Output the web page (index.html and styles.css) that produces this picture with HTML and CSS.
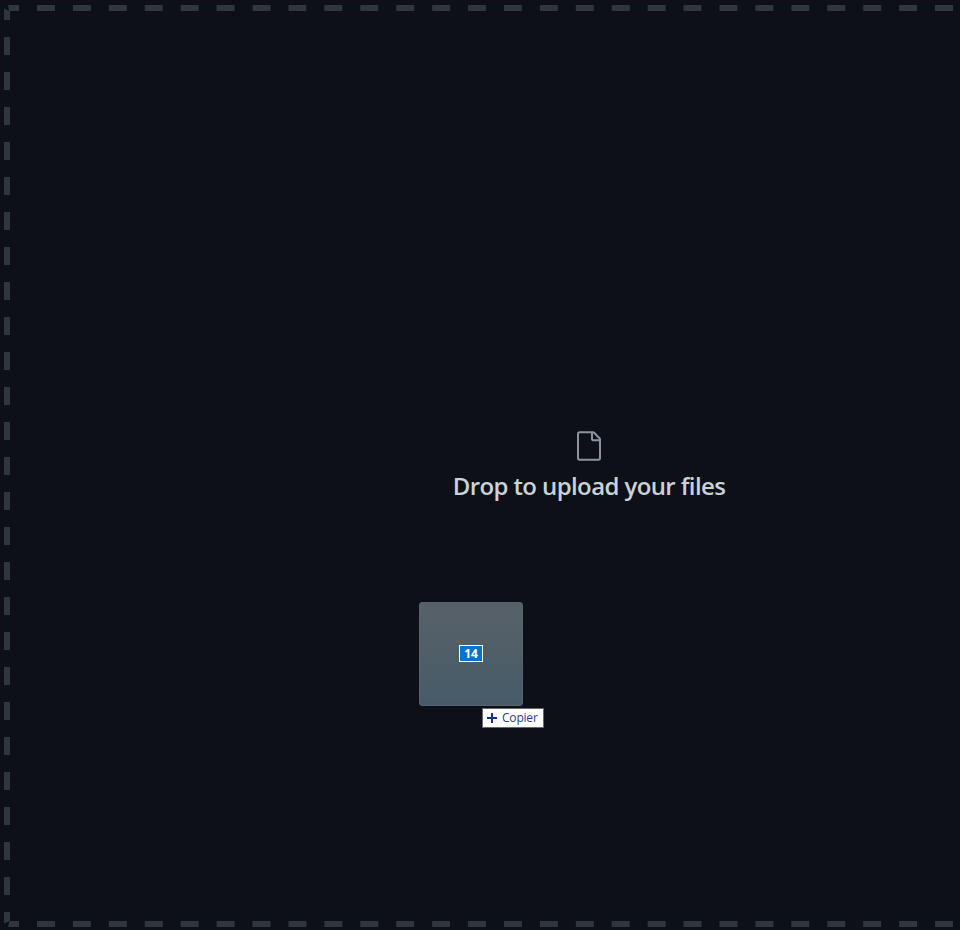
FILE: index.html
```html
<!DOCTYPE html>
<html lang="en">
<head>
<meta charset="utf-8">
<title>Upload files</title>
<link rel="stylesheet" href="styles.css">
</head>
<body>
<main class="dropzone">
  <svg class="outline" width="960" height="930" viewBox="0 0 960 930" fill="none" stroke="#30363d" stroke-width="6" aria-hidden="true">
    <path d="M37 8H960" stroke-dasharray="18 17.92"/>
    <path d="M37 924H960" stroke-dasharray="18 17.92"/>
    <path d="M7 37V910" stroke-dasharray="18 17"/>
    <path fill="#30363d" stroke="none" d="M8 5H19V11H10V20H4V8.500L9 11ZM4 912H10V921H19V927H8L9.500 921L4 923.500Z"/>
  </svg>
  <section class="prompt">
    <svg class="file-icon" width="32" height="32" viewBox="0 0 24 24" fill="#8b949e" aria-hidden="true">
      <path fill-rule="evenodd" d="M5 2.500a.500.500 0 0 0-.500.500v18a.500.500 0 0 0 .500.500h14a.500.500 0 0 0 .500-.500V8.500h-4a2 2 0 0 1-2-2v-4H5zm10 0v4a.500.500 0 0 0 .500.500h4a.500.500 0 0 0-.146-.336l-4.018-4.018A.500.500 0 0 0 15 2.500zM3 3a2 2 0 0 1 2-2h9.982a2 2 0 0 1 1.414.586l4.018 4.018A2 2 0 0 1 21 7.018V21a2 2 0 0 1-2 2H5a2 2 0 0 1-2-2V3z"/>
    </svg>
    <h1 class="title">Drop to upload your files</h1>
  </section>
  <div class="drag-preview"><span class="count">14</span></div>
  <div class="drag-action">
    <svg width="10" height="10" viewBox="0 0 10 10" stroke="#103099" stroke-width="2" aria-hidden="true"><path d="M5 0V10M0 5H10"/></svg>
    <span class="action-label">Copier</span>
  </div>
</main>
</body>
</html>
```
FILE: styles.css
```css
* { box-sizing: border-box; }
body {
  margin: 0;
  background: #0d1117;
  font-family: "Open Sans", "Noto Sans", sans-serif;
}
.dropzone {
  position: relative;
  width: 960px;
  height: 930px;
  padding-left: 218px;
  display: flex;
  justify-content: center;
}
.outline { position: absolute; left: 0; top: 0; }
.prompt {
  display: flex;
  flex-direction: column;
  align-items: center;
  padding-top: 429.5px;
}
.file-icon { display: block; }
.title {
  margin: 6.5px 0 0;
  font-size: 24px;
  line-height: 36px;
  font-weight: 600;
  letter-spacing: -0.6px;
  color: #c9d1d9;
  white-space: nowrap;
}
.drag-preview {
  position: absolute;
  left: 419px;
  top: 602px;
  width: 104px;
  height: 104px;
  display: flex;
  align-items: center;
  justify-content: center;
  border: 1px solid #526571;
  border-radius: 3px;
  background: linear-gradient(#586168, #505e67 50%, #465b69);
}
.count {
  width: 24px;
  height: 17px;
  margin-top: -1px;
  border: 1px solid #fff;
  background: #0873cc;
  color: #fff;
  font-size: 12px;
  font-weight: 700;
  line-height: 15px;
  text-align: center;
}
.drag-action {
  position: absolute;
  left: 482px;
  top: 708px;
  width: 62px;
  height: 20px;
  display: flex;
  align-items: center;
  gap: 5px;
  padding-left: 4px;
  border: 1px solid #686868;
  background: #fff;
}
.action-label {
  color: #26399f;
  font-size: 12px;
  line-height: 18px;
  letter-spacing: -0.2px;
}
```
